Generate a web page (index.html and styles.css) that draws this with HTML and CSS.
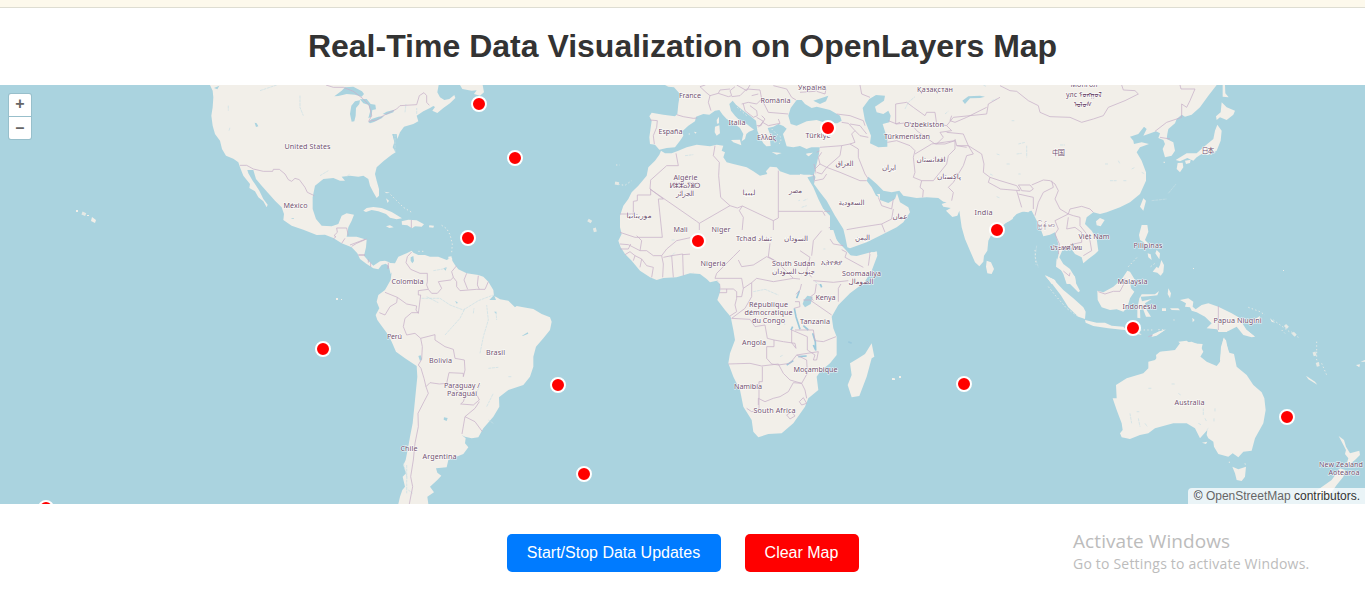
FILE: index.html
```html
<!DOCTYPE html>
<html lang="en">
<head>
<meta charset="utf-8">
<title>Real-Time Data Visualization</title>
<link rel="stylesheet" href="styles.css">
</head>
<body>
<div class="topbar"></div>
<h1 class="title">Real-Time Data Visualization on OpenLayers Map</h1>
<main class="map">
<svg class="world" viewBox="0 85 1365 419">
<!-- North America -->
<g transform="translate(200 84) scale(.33333)">
<path class="land" d="M30 3L38 20 40 40 38 70 34 95 38 125 45 150 60 170 66 195 78 215 100 224 115 235 120 250 130 275 150 300 148 312 165 322 175 340 190 352 200 370 203 362 190 345 178 320 165 300 158 290 145 268 142 258 160 258 168 285 185 305 205 328 225 350 245 370 252 390 250 408 275 425 310 437 350 453 375 452 400 462 425 478 455 490 472 508 480 525 500 540 520 553 535 556 545 543 557 539 566 545 572 570 580 560 568 535 555 530 540 532 520 545 505 530 492 515 498 490 500 467 470 458 440 458 445 430 455 410 462 392 440 388 425 395 415 420 395 427 365 425 348 405 338 375 338 340 345 305 370 285 400 282 420 290 435 290 425 278 450 275 475 278 490 275 505 285 510 305 520 325 530 342 537 335 537 315 530 290 525 270 530 250 550 232 575 212 587 205 578 190 583 175 577 150 590 150 592 165 600 145 612 128 640 120 655 112 650 95 670 82 690 72 700 66 705 69 697 80 712 87 730 72 750 58 766 42 763 33 748 45 733 48 720 40 712 25 716 3Z
M780 3L787 15 815 20 830 19 822 30 840 35 852 25 848 3ZM490 380L500 372 520 369 545 372 575 384 606 403 590 406 570 401 558 390 535 382 515 378 498 384ZM605 412L625 407 650 409 672 421 665 428 645 427 636 433 622 424 606 422ZM688 424L702 425 700 431 687 430ZM558 427L570 424 581 430 568 432ZM553 323L570 326 560 328ZM558 343L567 350 563 357ZM745 518L755 517 753 524 745 524Z"/>
<path class="land islets" d="M572 332L590 350 610 370 635 385M725 424L740 434 750 452 757 480 755 505M655 502H675"/>
<path class="water" d="M403 37L425 20 435 10 460 8 486 22 492 30 485 38 465 32 440 30 415 36ZM455 113L450 90 454 65 465 52 480 49 478 60 468 72 467 95 463 112ZM480 46L500 45 512 60 526 62 528 76 517 78 514 98 505 103 511 80 505 62 490 58ZM505 114L515 105 535 98 552 96 545 103 522 114 510 118ZM548 90L560 83 583 77 580 85 560 92ZM164 116L170 118 175 127 168 129ZM42 12L58 5 52 16ZM272 402L282 402 280 405ZM577 150L582 165 584 180 588 174 584 158Z"/>
<path class="river" d="M300 35V70L310 95M180 20L230 3M585 150V205M440 278L450 270M650 90V72M360 275L385 260M615 85L618 60M85 65V80M87 140L90 130"/>
<path class="border" d="M378 3L400 10H430L460 22 490 45 508 65 515 95 506 112 530 108 550 95 590 75 600 65 650 62 658 35 672 26 680 35V55L688 64M120 244H140L160 255 190 262H218L220 256H238L255 270 265 287 275 292 285 283 298 287 315 310 322 325 343 335M400 465L408 458 402 455 412 445 410 432H440L445 455M425 478L435 463M455 487L470 478 500 465M475 513L495 513M512 535V549M564 537V555M634 408V432"/>
</g>
<!-- South America -->
<g transform="translate(350 230) scale(.33333)">
<path class="land" d="M108 98L118 110 125 125 122 150 105 180 85 195 80 215 88 235 77 255 82 270 95 288 110 308 125 335 138 365 165 385 200 408 202 440 198 480 193 530 188 580 180 620 174 655 167 690 160 705 168 730 158 740 165 770 157 780 150 800 145 822H235L232 800 252 787 240 770 262 750 274 737 262 728 258 715 290 712 295 690 340 672 355 652 345 640 347 625 335 615 345 620 365 625 385 622 400 595 430 560 448 530 447 502 475 480 520 465 540 440 550 410 550 380 558 350 580 325 600 300 605 275 600 262 575 252 550 237 520 232 500 228 495 232 475 212 450 208 440 202 432 198 430 180 415 155 400 140 385 135 350 130 325 118 315 105 307 92 306 82 290 90 265 80 240 80 225 75 205 75 190 68 185 62 170 70 145 80 135 100Z"/>
<path class="water" d="M182 82L190 78 192 93 187 100 182 92ZM205 378L212 376 216 388 210 393ZM282 562L293 564 290 573 281 569ZM280 115L290 112 287 122ZM315 213L323 217 321 222ZM432 245H439V252ZM515 318L533 307 535 311 520 317ZM418 210L432 195 438 210Z"/>
<path class="river" d="M215 205H270L300 225 340 240 385 212 430 195M230 200L265 218M285 315L330 265 345 235M370 250L372 235M390 370L400 320 415 270 410 225M438 245L440 270M375 500L390 465M410 530L430 490M415 415L445 412M475 440L485 440M430 580L415 570M160 700L172 745M170 705V790M175 780L188 790M250 122L290 115"/>
<path class="border" d="M185 66L172 80 168 98 182 118 210 130H232V155L230 165 235 178 205 182V195H212L205 250 198 240 200 228 170 222 142 202 105 187M142 202L140 218 120 230 105 255 88 248M205 248L185 248 165 265 160 290 170 315 195 310 212 325 255 314V330L285 350 310 358 315 385 343 390 345 420 340 440V430L297 428 290 460 268 462 240 458 228 470 222 445 213 415 205 405 215 388 217 350 212 325M235 178L245 190H262L275 175 265 155 302 150 310 142 305 125 320 107M310 142L320 155V170L330 182 380 178 405 178 415 155M350 130L342 150 353 178M385 137L382 165 388 178M228 470L235 490 222 515 204 550 205 590 195 640 190 690 182 740 188 770 178 822M292 460L345 500 340 515 332 522 370 525 388 510 382 497M388 515L375 535 345 560 336 612M345 560L375 575 397 605M0 45L45 28M25 75L45 75M55 88V98M115 98V115"/>
</g>
<!-- Europe and North Africa -->
<g transform="translate(600 84) scale(.33333)">
<path class="land" d="M195 3L205 8 222 10 240 30 235 60 232 90 225 97 190 92 155 86 148 97 155 110 148 160 150 180 165 182 178 197 200 192 225 190 240 170 250 155 247 142 265 125 285 112 288 98 310 90 328 92 345 80 358 78 368 92 380 105 400 117 420 132 430 150 425 172 435 165 439 150 447 143 462 137 440 120 420 110 405 95 393 80 388 60 398 50 408 62 430 80 450 95 468 110 472 140 480 160 490 178 499 187 512 186 510 168 524 165 510 150 503 132 520 128 535 120 550 126 560 134 549 150 555 170 560 187 580 190 600 186 620 195 640 187 660 186 657 210 650 240 642 272 662 300H690V3Z
M183 200L178 212 165 230 145 250 140 275 115 305 95 325 85 345 70 365 60 395 60 430 65 450 55 470 62 490 75 510 95 530 120 560 150 580 170 588 190 582 230 580 270 568 300 570 320 585 330 595 350 590 360 600 362 630H690V395L670 375 655 345 640 310 622 280 642 275 630 272 600 272 570 272 540 262 530 250 510 248 498 262 502 270 480 275 460 262 440 250 400 240 380 235 370 220 375 205 365 200 370 185 350 182 330 187 290 182 260 190 235 200 215 208 195 208ZM393 168L420 167 424 184 400 175ZM345 128L358 124 360 148 350 155 344 145ZM350 108L357 98V118L351 119ZM515 204L545 207 530 212ZM618 210L638 206 625 217ZM282 143L290 145 286 149Z"/>
<path class="land islets" d="M45 295L60 302 75 304 95 290M515 135L530 150 543 160 542 175 532 184M266 150H272M412 70L440 95M48 243H60"/>
<path class="river" d="M255 215L280 212M210 520L225 505M215 468H225M595 350L615 345 625 350 600 370 625 365M410 480V495M655 592L670 605M660 508L665 520"/>
<path class="border" d="M230 92L250 98 280 103 292 102M150 108L172 110 170 130 160 155 163 180M316 3L300 8 318 25 330 35 325 55 333 80M330 35L355 28 385 38 395 35 390 20 405 8M355 28L360 18 390 15M410 3L440 20 450 3M395 38L420 35 440 15 480 18 485 45 470 60 445 55 425 60M430 60L435 80 460 100 472 95 470 80 450 65M485 45L505 85 565 90M485 95L495 105 488 115 505 125 540 118M470 100L490 112 475 130M520 5L560 15 575 40 588 48M640 3L650 15 690 25M488 115L483 125 470 125M455 35L475 30M540 118L535 105M228 208L235 245 200 245 150 290M345 185L340 215 358 235 356 275 362 340 390 365 298 418 290 412 150 315 152 290M152 315V333H112V350L100 352V390H60M150 315L190 345H175L187 460H105L90 455 60 445M390 365L412 372 427 366 520 410 535 402V260M535 382H690M520 410V460L505 475 500 510 515 545 485 540 430 555 418 545 400 560 390 585 370 590 352 590M427 366L418 380 430 400 425 455 412 485 350 490 315 485 290 490M298 418V455L230 470 200 495 185 515 160 515 140 500 120 500 85 482 60 480M185 515L190 540 188 580M190 520L215 515 220 580M215 515L248 510 250 575M248 512L275 510 290 490 292 530 280 565M110 455L125 470 120 500M60 495H85L92 480M75 512L90 503 105 515 100 530M105 515L125 525 120 550M125 525L140 545 160 550 155 580M418 490V505L430 530 418 545M360 600L362 612H412M412 610L430 565M505 540L535 575 570 585 640 582M545 582L590 550M515 510L530 520 580 515 615 505 640 490 650 455 690 430M655 500L640 520 655 550 640 580M645 185L670 188M650 205L660 200M642 240L650 275M640 270L645 300"/>
</g>
<!-- Southern Africa -->
<g transform="translate(690 230) scale(.33333)">
<path class="land" d="M0 128L40 125 62 150 80 150 90 155 92 180 82 210 105 240 122 260 130 300 135 330 120 370 115 400 130 440 150 480 160 530 185 570 190 605 205 622 235 612 275 610 310 580 345 530 355 505 385 480 380 440 390 425 420 400 440 375 440 320 430 295 425 260 445 225 480 190 520 160 545 115 562 68 545 66 500 78 470 75 440 30 430 0H0ZM545 340L553 380 545 385 530 440 508 498 485 502 473 465 485 435 480 400 505 385 525 372ZM610 445H615V450H610Z"/>
<path class="water" d="M342 210L352 197 368 200 362 222 345 232 338 222Z"/>
<path class="lake" d="M313 235L318 260 330 298M328 183L320 205M368 310L376 335 377 360 370 345M290 405L310 392M340 287L355 300M388 155L395 172M325 380L350 378M303 300L308 290M475 335L485 340"/>
<path class="river" d="M190 185L225 178 265 195M270 380L280 375M280 272L285 285"/>
<path class="border" d="M88 177H130L140 185V205L135 225 140 245 120 258M110 177V188H88M185 158L160 175 155 200H140M160 175L155 145 75 145 80 130 130 80 150 60M145 90L155 110 190 105 230 80 260 95M240 40L235 80 260 95 310 145 355 150 390 140 385 110 370 95 380 65M185 158L200 145 250 155 310 145M185 158L185 200 165 235 125 265 180 268 195 290 225 285 232 325 252 330V350H230V385L245 402 265 405 300 400 320 375 385 365 380 390 370 390 375 375 352 360V320L305 300 305 338 318 355 315 340 280 335 252 330M115 402L180 400 215 408 265 402 280 430 300 450 335 460 352 430 350 390 320 375M335 460L310 458 295 485 270 500 250 505 225 515 205 505V525M335 460L345 480 350 505M217 410V455H207V540L185 545 170 535M290 555L305 545 315 558 300 567ZM328 515L340 503 350 520 335 525ZM318 193L330 180 335 160M340 210H360L425 255M330 160L380 155 375 190 362 200 370 212M315 215L328 215 330 230 312 235M315 300H370L375 332 400 335 438 320M385 155L430 155 460 150 445 175V215M375 150L440 155 500 115 520 108 460 75M455 155L540 95M380 60L395 25 430 25 460 65M540 65L530 105"/>
</g>
<!-- Western and Central Asia, India -->
<g transform="translate(800 84) scale(.33333)">
<path class="land" d="M0 3H720V400L705 385 697 375 685 385 660 382 640 395 638 405 620 415 600 432 575 450 565 470 562 500 552 515 550 533 538 547 525 535 510 500 495 465 485 430 478 380 472 395 457 399 438 380 452 372 430 368 425 360 440 355 430 353 415 342 380 340 350 342 310 335 298 320 275 325 250 320 230 300 205 278 200 290 215 310 228 335 238 340 231 330 240 330 240 348 265 357 285 345 291 328 300 355 325 370 330 385 310 415 290 430 250 450 200 475 150 493 142 490 135 455 130 435 105 395 80 350 60 325 42 300 50 262 55 240 60 190 30 190 0 185ZM0 270L20 275 25 290 45 330 60 365 72 378 75 410 90 440 115 475 135 495 155 518 180 518 230 502 232 515 215 560 190 600H0ZM560 530L573 535 582 555 575 570 562 568 558 548ZM18 209L38 206 26 217Z"/>
<path class="water" d="M-35 95L-28 72-10 48 5 48 15 60 35 72 50 68 90 78 120 95 125 110 112 118 80 118 50 108 20 112-10 125-28 120ZM40 50L65 42 85 35 78 52 60 60ZM188 72L208 45 228 33 255 35 252 50 225 68 230 85 250 90 265 80 272 95 268 115 248 120 262 165 262 188 235 190 210 178 213 155 195 110ZM487 50L505 37 540 35 555 38 540 42 510 43 495 60Z"/>
<path class="river" d="M315 75L325 55 345 38M575 50L590 45M550 3L560 8M435 90L445 82M590 338L600 342M590 210L600 213M660 225H670M665 265L670 258M70 495H76M45 592L60 605M10 350L22 345M5 370L20 365M570 270L580 275M700 180V190"/>
<path class="border" d="M0 25L45 22 70 3M50 22L75 30 78 15M110 90L150 95 190 110 195 125M125 115L145 118 165 140 155 150 165 175 150 180 125 185 60 190M150 120L180 125 200 150M165 140L180 155 205 160M150 180L175 195 175 220 195 270 205 285M125 185L120 215 80 250 60 240M60 240L45 255M80 250L120 265 180 290 200 290M50 265L65 270 80 250M60 240L55 220 65 205M45 290L70 285 80 270M235 340L245 365 275 375 280 345M280 375L275 405 245 420 180 430 140 437M245 420L255 445M180 3L185 30 210 40M262 175L290 170 330 185 345 200 340 220 345 265 340 280 365 290 360 310 370 318 368 340M287 120V60L320 55 340 70 375 95 380 85 405 85 410 120 440 125 460 100 560 90 565 60 600 40 635 3M265 110L290 120 330 115 350 140 405 180 435 180 465 170M287 120L300 115M440 125L455 140 420 145 430 160 410 180M455 95L450 110 465 115 500 100 560 70M440 145L490 150 505 185 470 185 465 165M345 210L395 180 465 170 465 195 445 215 440 240 420 265 400 290 365 290M505 185L520 210 500 215 490 245 460 295 445 310 460 325 455 350M470 185L500 190M505 185L545 210 552 240 550 265 570 280 600 290 650 310 655 322 620 325 565 295 570 280M655 305L700 300 720 295M665 305L663 320 700 320 695 305ZM655 320L665 360 690 370M665 325L700 335 710 350 705 385M640 3L650 25 685 55 720 68M0 382H68L75 395M0 500L30 520 20 560 35 580M65 440L40 470 35 515M130 485L100 480 90 465M125 497L140 505 135 520 190 550M210 510L205 545M40 590L100 595 145 590"/>
</g>
<!-- East Asia -->
<g transform="translate(1000 84) scale(.33333)">
<path class="land" d="M0 3H650L625 35 600 70 575 92 555 98 545 92 530 105 525 118 505 135 502 150 500 165 520 175 525 200 515 215 495 220 488 195 495 180 490 168 475 162 480 148 468 142 445 150 430 155 440 135 432 128 415 150 390 158 400 170 402 180 425 175 447 180 420 190 410 205 425 230 438 265 438 290 420 330 390 355 360 370 320 385 300 390 280 385 260 400 255 420 275 440 290 465 295 500 285 510 265 525 250 538 245 520 225 510 210 490 190 492 178 520 190 540 210 555 225 580 228 600H200L190 570 170 535 176 510 175 480 165 445 150 452 130 457 120 430 105 400 95 380 75 380 50 390 30 410 0 425ZM665 55L680 70 705 80 700 92 680 108 660 100 650 108 648 97 662 85ZM652 122L665 140 662 170 650 200 625 212 605 210 590 220 580 230 562 222 540 232 527 228 560 208 590 208 610 190 640 165 645 140ZM533 237L548 236 550 250 540 265 530 255ZM555 230L572 227 570 237 558 240ZM668 3H675L676 28 686 40 668 38ZM430 343L438 350 430 380 420 368ZM288 412L300 402 314 408 302 427 290 424ZM488 234L495 233V237ZM135 573L165 588 170 600H155Z"/>
<path class="river" d="M355 230L360 240M315 240H325M330 290L350 290M370 290H380M395 255L405 250M425 265L435 270M55 180L75 175M50 210L65 208M80 185V220M20 240H30M35 110H43M180 183H195M55 270H62M110 485L105 520 115 550M455 350L500 345M505 328L528 300"/>
<path class="border" d="M0 5L30 20 50 22 85 50 115 65 120 85 150 98 210 100 245 115 280 105 310 95 325 70 375 50 415 30 405 20 370 18 365 3M540 3L543 15 585 15 570 50 560 70 545 60V100L500 115 465 142M480 160L510 165M0 290L50 305 60 320 0 315M55 303L90 303 100 315 90 322 65 320 60 310ZM95 303L130 288 150 290 165 300 175 320 165 345 180 375 205 390 210 375 245 367 270 375 280 385M155 290L160 310 130 325 115 355 105 395M50 320L65 370M55 330L100 340 100 375M205 390L165 410 175 435 165 450 178 480 175 510M205 390L220 395 240 400 240 425 260 450 270 470 275 500 250 515M205 400L200 435 225 430 245 445 245 475 220 480 215 495M195 565L200 575 210 570"/>
</g>
<!-- Maritime Southeast Asia -->
<g transform="translate(1030 220) scale(.33333)">
<path class="land" d="M80 115L78 140 100 155 108 180 145 217 150 213 138 190 135 170 125 160 105 150 90 130ZM45 167L70 178 100 210 130 235 160 262 167 275 165 297 145 290 115 262 92 225 65 190ZM165 300L200 308 225 308 245 317 280 320 290 331 235 325 190 318 167 308ZM202 212L220 217 250 200 275 178 292 152 300 155 315 180 300 185 303 205 313 215 300 235 292 262 280 275 260 268 240 270 215 262 203 240ZM328 235L335 223 375 223 387 213 382 226 355 229 332 230 336 244 365 237 345 250 350 270 363 290 348 290 339 266 330 270 331 295 322 293 322 265ZM335 15H352L355 35 345 60 362 77 355 82 340 66 330 60 327 45ZM368 155L380 140 385 145 390 135 394 120 402 135 400 157 392 167 382 158ZM353 100L362 103 365 120 355 112ZM380 90L390 100 388 118 376 100ZM450 240L475 235 490 245 488 260 497 268 515 255 535 250 565 260 605 280 640 300 637 310 650 330 675 350 665 352 640 345 620 320 595 333 570 334 560 328 530 325 545 310 525 290 500 277 485 272 480 262 465 260 468 250ZM365 350L368 343 385 335 408 328 380 347ZM415 205L423 220 420 235 413 222ZM420 265L445 265 450 271 425 270ZM396 265H408V273H396ZM640 305L660 307 690 288 688 300 665 312ZM487 293L494 300 488 307ZM200 5L220 3 210 18ZM380 420L378 405 390 395 435 390 450 370 485 365 510 375 520 395 505 420ZM570 420L580 355 588 360 600 420ZM720 295L735 308 725 305ZM325 335L335 345 320 342Z"/>
<path class="land islets" d="M295 140L325 108M55 200L75 225 110 265 145 290M330 330H370M385 329H400M655 262L690 275 705 285M730 300L755 318 775 333 805 352M860 365V400M15 90L18 135M362 140L375 130M430 300H440"/>
<path class="border" d="M205 215L225 222 250 214H270L280 195 285 175M565 258V335M100 153L118 168 120 158M355 350L368 345"/>
</g>
<!-- Australia and New Zealand -->
<g transform="translate(1090 330) scale(.33333)">
<path class="land" d="M402 22L410 45 418 68 432 72 440 110 470 135 490 165 515 187 523 205 527 240 520 280 495 325 485 362 460 365 445 382 428 370 415 380 385 372 372 350 370 335 355 325 350 315 352 300 330 325 315 295 290 280 250 280 195 295 175 310 150 315 120 327 95 322 90 310 98 300 95 280 80 240 68 205 80 205 78 165 110 145 160 130 175 115 175 95 195 90 215 65 240 65 245 75 258 75 258 58 275 45 265 35 290 32 300 40 338 42 335 55 325 75 350 95 380 108 390 95 393 50ZM336 338L352 335 348 342ZM427 410L445 418 468 410 465 440 455 453 440 450 435 430ZM746 318L762 330 768 350 780 370 808 362 810 375 795 390 780 402 768 408 775 385 765 372 768 360ZM750 415L765 420 760 440 740 465 715 500 685 510 650 500 690 475 725 450ZM648 137L675 155 682 164 655 148ZM798 105L810 103 808 112ZM812 95L825 90V95ZM383 0H412V6H385ZM455 0H470L495 20 475 15ZM185 20L205 5 225 0 200 15Z"/>
<path class="land islets" d="M418 395V402M465 400L468 410M680 65V90L690 105M695 100L710 135M605 5L620 20M575 0L585 10"/>
<path class="river" d="M340 235V255M345 265L350 275M325 280L335 285M375 235V245M372 265V275M120 250L125 280M140 245H148M165 280L172 290M175 175H185M245 162H255M265 190L272 195M145 265L150 290M350 300L355 295"/>
</g>
<!-- Scattered Pacific and Atlantic islands -->
<path class="land" d="M92 217l4 3-1 3-4-2zM76 210h2v2h-2zM87 215h2v1h-2zM336 298h2v2h-2zM341 299h1v1h-1zM899 376h2v2h-2zM892 378h2v2h-2zM1193 268h1v1h-1zM1283 270h1v1h-1z"/>
<path class="land islets" d="M82 213L89 216M588 220L593 223 597 238M615 183L620 184M1285 325L1298 338M1314 352L1320 372"/>
<g class="labels">
<text x="307.500" y="149" textLength="46">United States</text><text x="295.500" y="208" textLength="24">México</text>
<text x="407.500" y="284" textLength="32">Colombia</text><text x="394.500" y="338.500" textLength="15">Perú</text><text x="440.500" y="362.500" textLength="23">Bolivia</text><text x="495.500" y="354.500" textLength="19">Brasil</text><text x="462" y="387.500" textLength="36">Paraguay /</text><text x="462" y="395.500" textLength="30">Paraguái</text><text x="409" y="450.500" textLength="17">Chile</text><text x="439.500" y="458.500" textLength="34">Argentina</text>
<text x="690" y="98" textLength="22">France</text><text x="670.500" y="134" textLength="24">España</text><text x="737" y="125" textLength="17">Italia</text><text x="775.500" y="103" textLength="30">România</text><text x="812" y="90" textLength="28">Україна</text><text x="766.500" y="139.500" textLength="19">Ελλάς</text><text x="818" y="138" textLength="25">Türkiye</text>
<text x="685.500" y="180" textLength="24">Algérie</text><text x="685" y="188" textLength="31">ⵍⵣⵣⴰⵢⴻⵔ</text><text x="685" y="195.500" textLength="18">الجزائر</text><text x="749" y="195" textLength="13">ليبيا</text><text x="795.500" y="193" textLength="13">مصر</text><text x="639" y="218" textLength="25">موريتانيا</text><text x="680.500" y="231.500" textLength="14">Mali</text><text x="721" y="231.500" textLength="19">Niger</text><text x="754" y="240.500" textLength="36">Tchad تشاد</text><text x="796" y="240.500" textLength="24">السودان</text><text x="713" y="265.500" textLength="25">Nigeria</text><text x="793.500" y="265.500" textLength="43">South Sudan</text><text x="793.500" y="274" textLength="43">جنوب السودان</text><text x="831" y="265" textLength="21">ኢትዮጵያ</text><text x="861.500" y="276" textLength="39">Soomaaliya</text><text x="861" y="284" textLength="25">الصومال</text><text x="825.500" y="300" textLength="20">Kenya</text>
<text x="768.500" y="307" textLength="39">République</text><text x="768.500" y="315" textLength="48">démocratique</text><text x="768.500" y="323" textLength="33">du Congo</text><text x="815" y="323.500" textLength="30">Tanzania</text><text x="754" y="345" textLength="24">Angola</text><text x="815.500" y="371.500" textLength="44">Moçambique</text><text x="748" y="389" textLength="28">Namibia</text><text x="774.500" y="412.500" textLength="42">South Africa</text>
<text x="935" y="91.500" textLength="36">Қазақстан</text><text x="924" y="127" textLength="40">Oʻzbekiston</text><text x="907" y="138.500" textLength="46">Türkmenistan</text><text x="844.500" y="165.500" textLength="18">العراق</text><text x="889" y="170" textLength="14">ایران</text><text x="931" y="162" textLength="29">افغانستان</text><text x="949" y="179" textLength="24">پاکستان</text><text x="851.500" y="205" textLength="26">السعودية</text><text x="900" y="219" textLength="15">عمان</text><text x="862.500" y="239.500" textLength="15">اليمن</text><text x="983.500" y="214.500" textLength="18">India</text>
<text x="1084" y="87" textLength="27">Монгол</text><text x="1084" y="97" textLength="36">улс ᠮᠣᠩᠭᠣᠯ</text><text x="1083" y="107" textLength="18">ᠤᠯᠤᠰ</text><text x="1058.500" y="155" textLength="13">中国</text><text x="1208" y="153" textLength="13">日本</text><text x="1046" y="227" textLength="18">မြန်မာ</text><text x="1094" y="239" textLength="31">Việt Nam</text><text x="1066" y="250" textLength="32">ประเทศไทย</text><text x="1148" y="248" textLength="29">Pilipinas</text><text x="1132.500" y="283.500" textLength="30">Malaysia</text><text x="1139.500" y="309" textLength="34">Indonesia</text><text x="1237.500" y="323" textLength="48">Papua Niugini</text><text x="1189.500" y="404.500" textLength="30">Australia</text><text x="1341" y="466.500" textLength="44">New Zealand</text><text x="1344" y="474.500" textLength="31">Aotearoa</text>
</g>
<g class="markers">
<circle cx="479" cy="104" r="7"/><circle cx="515" cy="158" r="7"/><circle cx="468" cy="238" r="7"/><circle cx="323" cy="349" r="7"/><circle cx="558" cy="385" r="7"/><circle cx="584" cy="474" r="7"/><circle cx="46" cy="508" r="7"/><circle cx="698" cy="241" r="7"/><circle cx="828" cy="128" r="7"/><circle cx="997" cy="230" r="7"/><circle cx="964" cy="384" r="7"/><circle cx="1133" cy="328" r="7"/><circle cx="1287" cy="417" r="7"/>
</g>
</svg>
<div class="zoom"><button class="zoom-btn">+</button><button class="zoom-btn">–</button></div>
<div class="attribution">© <a class="osm">OpenStreetMap</a> contributors.</div>
</main>
<footer class="controls">
<button class="btn start">Start/Stop Data Updates</button>
<button class="btn clear">Clear Map</button>
<div class="watermark"><div class="wm-title">Activate Windows</div><div class="wm-text">Go to Settings to activate Windows.</div></div>
</footer>
</body>
</html>
```
FILE: styles.css
```css
* { box-sizing: border-box; }
body { margin: 0; height: 593px; overflow: hidden; background: #fff; font-family: "Liberation Sans", Arial, sans-serif; display: flex; flex-direction: column; }
.topbar { height: 8px; background: #fdf9ec; border-bottom: 1px solid #deddd2; flex: none; }
.title { margin: 0; height: 77px; line-height: 77px; font-size: 32px; font-weight: bold; color: #333; text-align: center; white-space: nowrap; flex: none; }
.map { position: relative; height: 419px; flex: none; overflow: hidden; background: #aad3df; }
.world { display: block; width: 1365px; height: 419px; }
.land { fill: #f2efe9; }
.islets { fill: none; stroke: #e5e9e5; stroke-width: 3; stroke-dasharray: 4 7; }
.water { fill: #aad3df; }
.lake { fill: none; stroke: #9bc9dc; stroke-width: 5; stroke-linejoin: round; }
.river { fill: none; stroke: #c8e0e5; stroke-width: 2; stroke-dasharray: 9 2; }
.border { fill: none; stroke: #c8b2c9; stroke-width: 2.3; stroke-linejoin: round; }
.labels { font-family: "Noto Sans", "DejaVu Sans", "Noto Sans CJK SC", sans-serif; font-size: 7.2px; fill: #71516f; text-anchor: middle; stroke: #fffc; stroke-width: 1.2px; paint-order: stroke; }
.markers { fill: #f00; stroke: #fff; stroke-width: 2; }
.zoom { position: absolute; left: 8px; top: 8px; display: flex; flex-direction: column; gap: 1px; padding: 1px; border-radius: 3px; background: #98bfcb; }
.zoom-btn { width: 22px; height: 22px; border: 0; padding: 0; background: #fff; color: #666; font: bold 16px/20px "Liberation Sans", Arial, sans-serif; }
.zoom-btn:first-child { border-radius: 2px 2px 0 0; line-height: 18px; padding-bottom: 2px; }
.zoom-btn:last-child { border-radius: 0 0 2px 2px; }
.attribution { position: absolute; right: 0; bottom: 0; height: 16px; width: 177px; padding: 0 5px; text-align: right; line-height: 16px; font-size: 12px; color: #333; background: #ffffffbf; border-radius: 4px 0 0; white-space: nowrap; }
.osm { color: #666; }
.controls { position: relative; flex: 1; display: flex; justify-content: center; align-items: flex-start; gap: 24px; padding-top: 30px; }
.btn { height: 38px; padding: 0; border: 0; border-radius: 5px; color: #fff; font: 16px "Liberation Sans", Arial, sans-serif; }
.start { width: 214px; background: #007bff; }
.clear { width: 114px; background: #f00; }
.watermark { position: absolute; left: 1073px; top: 25px; color: #bcbcbc; font-family: "Open Sans", sans-serif; white-space: nowrap; }
.wm-title { font-size: 19px; line-height: 25px; letter-spacing: .08px; }
.wm-text { font-size: 14px; line-height: 20px; letter-spacing: .2px; }
```
